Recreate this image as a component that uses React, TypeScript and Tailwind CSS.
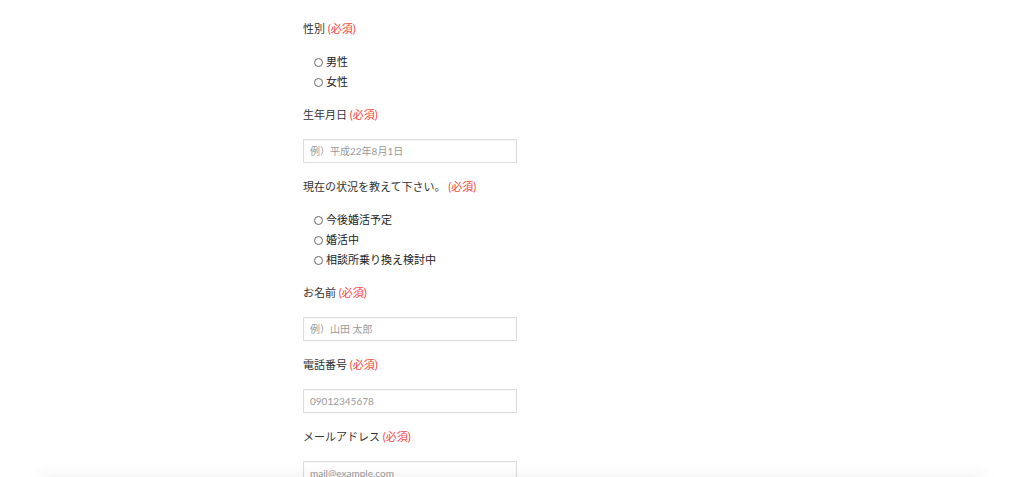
const font = { fontFamily: 'Lato, "Noto Sans CJK JP", sans-serif' }

function Label({ text }: { text: string }) {
  return (
    <p className="text-[11px] leading-5 text-[#333]">
      {text} <span className="text-[#f0463c]">(必須)</span>
    </p>
  )
}

function Radios({ items }: { items: string[] }) {
  return (
    <div className="pl-[11px]">
      {items.map((item) => (
        <label key={item} className="flex items-center h-5 text-[11px] text-[#222]">
          <span className="w-[9px] h-[9px] rounded-full border border-[#666] bg-white mr-[3px]" />
          {item}
        </label>
      ))}
    </div>
  )
}

function Field({ placeholder }: { placeholder: string }) {
  return (
    <input
      type="text"
      placeholder={placeholder}
      className="block w-[214px] h-[24px] border border-[#dcdcdc] shadow-[inset_0_1px_2px_rgba(0,0,0,0.04)] px-[6px] text-[10px] text-[#333] placeholder:text-[#999] outline-none"
    />
  )
}

export default function App() {
  return (
    <div className="min-h-screen bg-white" style={font}>
      <form className="mx-auto w-[418px] pt-[19px] pb-10">
        <Label text="性別" />
        <div className="mt-[13px]">
          <Radios items={['男性', '女性']} />
        </div>
        <div className="mt-[13px]">
          <Label text="生年月日" />
        </div>
        <div className="mt-[14px]">
          <Field placeholder="例）平成22年8月1日" />
        </div>
        <div className="mt-[14px]">
          <Label text="現在の状況を教えて下さい。" />
        </div>
        <div className="mt-[13px]">
          <Radios items={['今後婚活予定', '婚活中', '相談所乗り換え検討中']} />
        </div>
        <div className="mt-[13px]">
          <Label text="お名前" />
        </div>
        <div className="mt-[14px]">
          <Field placeholder="例）山田 太郎" />
        </div>
        <div className="mt-[14px]">
          <Label text="電話番号" />
        </div>
        <div className="mt-[14px]">
          <Field placeholder="09012345678" />
        </div>
        <div className="mt-[14px]">
          <Label text="メールアドレス" />
        </div>
        <div className="mt-[14px]">
          <Field placeholder="mail@example.com" />
        </div>
      </form>
      <div className="fixed left-[40px] right-[40px] bottom-[-40px] h-[40px] bg-white shadow-[0_0_18px_rgba(0,0,0,0.07)]" />
    </div>
  )
}
